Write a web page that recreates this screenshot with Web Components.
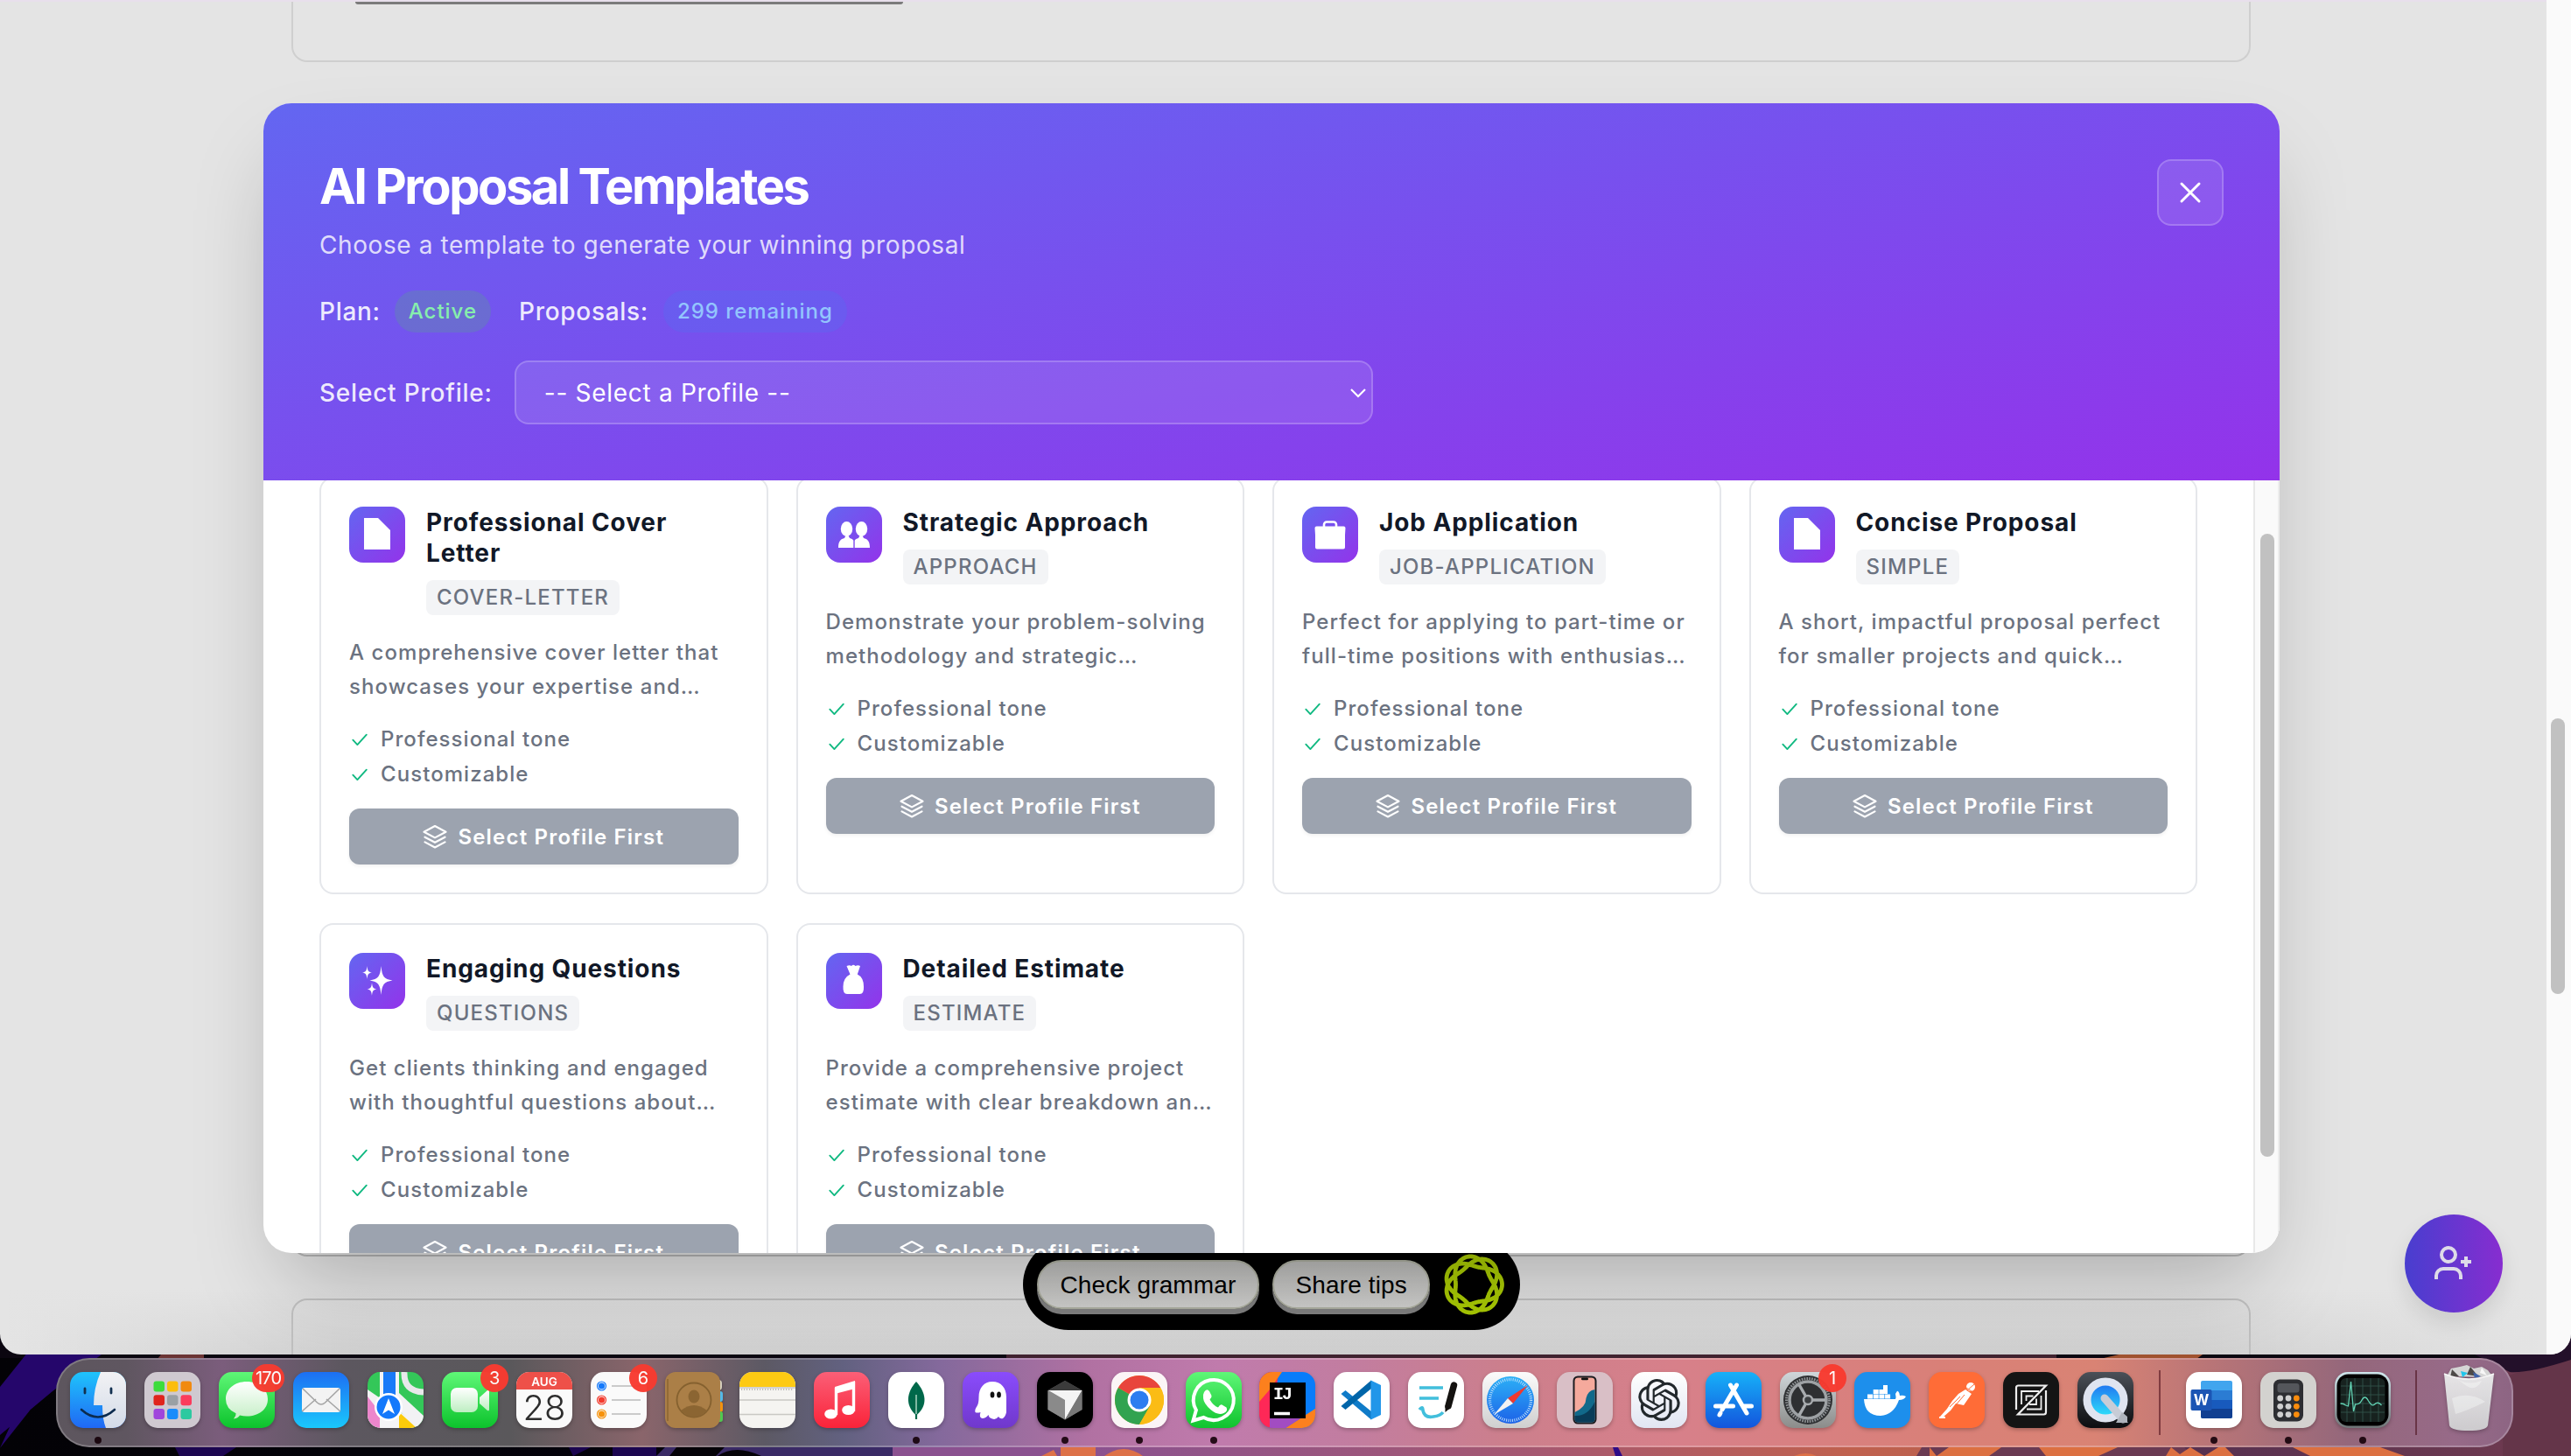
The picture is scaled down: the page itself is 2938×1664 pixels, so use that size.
<!DOCTYPE html>
<html lang="en">
<head>
<meta charset="utf-8">
<title>AI Proposal Templates</title>
<style>
html,body{margin:0;padding:0}
body{width:2938px;height:1664px;overflow:hidden;background:#000;font-family:Inter,"Liberation Sans",sans-serif}
</style>
</head>
<body>
<desk-top>
  <app-window>
    <page-backdrop></page-backdrop>
    <assistant-bar slot="float">
      <key-button>Check grammar</key-button>
      <key-button>Share tips</key-button>
    </assistant-bar>
    <proposal-dialog slot="dialog" heading="AI Proposal Templates" sub="Choose a template to generate your winning proposal">
      <template-card icon="doc" heading="Professional Cover Letter" tag="COVER-LETTER">A comprehensive cover letter that<br>showcases your expertise and…</template-card>
      <template-card icon="people" heading="Strategic Approach" tag="APPROACH">Demonstrate your problem-solving<br>methodology and strategic…</template-card>
      <template-card icon="case" heading="Job Application" tag="JOB-APPLICATION">Perfect for applying to part-time or<br>full-time positions with enthusias…</template-card>
      <template-card icon="doc" heading="Concise Proposal" tag="SIMPLE">A short, impactful proposal perfect<br>for smaller projects and quick…</template-card>
      <template-card icon="spark" heading="Engaging Questions" tag="QUESTIONS">Get clients thinking and engaged<br>with thoughtful questions about…</template-card>
      <template-card icon="bag" heading="Detailed Estimate" tag="ESTIMATE">Provide a comprehensive project<br>estimate with clear breakdown an…</template-card>
    </proposal-dialog>
    <fab-button slot="float"></fab-button>
  </app-window>
  <mac-dock slot="dock"></mac-dock>
</desk-top>

<script>
const define=(name,html,after)=>customElements.define(name,class extends HTMLElement{
  connectedCallback(){
    if(this.shadowRoot)return;
    const r=this.attachShadow({mode:'open'});
    r.innerHTML=typeof html==='function'?html(this):html;
    if(after)after(r,this);
  }
});

/* ---------- template card ---------- */
const glyphs={
 doc:'<path d="M17 13h16l14 14v22H17z" fill="#fff"/>',
 people:'<g fill="#fff"><ellipse cx="23.500" cy="25.500" rx="6.700" ry="8.500"/><ellipse cx="40.500" cy="25.500" rx="6.700" ry="8.500"/><path d="M14 47c0-8 3-10 7-11l1.500-3h3l1.500 3c2 .6 3.600 1.300 4.300 2.800V47zM50 47c0-8-3-10-7-11l-1.500-3h-3l-1.500 3c-2 .6-3.600 1.300-4.300 2.800V47z"/></g>',
 case:'<path d="M25 24v-3.500a3 3 0 0 1 3-3h8a3 3 0 0 1 3 3V24" fill="none" stroke="#fff" stroke-width="2.600"/><path d="M16.500 22.500h31q2 0 2 2l-.5 8v14q0 2-2 2H17q-2 0-2-2v-14l-.5-8q0-2 2-2z" fill="#fff"/>',
 spark:'<g fill="#fff"><path d="M36.500 15c1.100 12 3.200 15 13 16.500-9.800 1.500-11.900 4.500-13 16.500-1.100-12-3.200-15-13-16.500 9.800-1.500 11.900-4.500 13-16.500z"/><path d="M20.500 15c.5 5.300 1.300 6.700 5.500 7.500-4.200.8-5 2.200-5.500 7.500-.5-5.300-1.300-6.700-5.500-7.500 4.200-.8 5-2.200 5.500-7.500z"/><path d="M26 34c.5 5.300 1.300 6.700 5.500 7.500-4.200.8-5 2.200-5.500 7.500-.5-5.300-1.300-6.700-5.500-7.500 4.200-.8 5-2.200 5.500-7.500z"/></g>',
 bag:'<path d="M23.500 15q3.500-1.500 5.500 0 2-2.500 4.500 0 3-1.500 5.500 0L35.800 24.500q7.200 3.500 7.200 14 .5 8.500-4.500 8.500H24q-5 0-4.500-8.500 0-10 8-14z" fill="#fff"/>'
};
const check='<svg width="24" height="24" viewBox="0 0 24 24"><path d="M4.300 12.700l5.100 5.400L19.800 6.700" fill="none" stroke="#10b981" stroke-width="1.900" stroke-linecap="round" stroke-linejoin="round"/></svg>';
define('template-card',e=>`<style>
:host{display:flex;flex-direction:column;box-sizing:border-box;padding:32px;border:2px solid #e5e7eb;border-radius:16px;background:#fff;color:#6b7280;font-size:24px;font-weight:500;letter-spacing:1.060px}
header{display:flex;gap:24px;align-items:flex-start;margin-bottom:23px}
.ico{width:64px;height:64px;flex:none;border-radius:16px;background:linear-gradient(135deg,#6366f1,#9333ea)}
h3{margin:1px 0 13px;font-size:28px;line-height:35px;font-weight:700;color:#111827;letter-spacing:.9px}
.tag{display:block;width:max-content;background:#f3f4f6;border-radius:8px;padding:4px 12px;line-height:32px;letter-spacing:1.200px}
p{margin:0 0 25px;line-height:39px;white-space:nowrap}
ul{list-style:none;margin:0 0 23px;padding:0;display:flex;flex-direction:column;gap:8px}
li{display:flex;gap:12px;align-items:center;line-height:32px}
button{all:unset;display:flex;align-items:center;justify-content:center;gap:12px;height:64px;border-radius:12px;background:#9ca3af;color:#fff;font-weight:600;letter-spacing:1.200px;flex:none;box-shadow:0 2px 4px rgba(0,0,0,.06)}
</style>
<header><svg class="ico" viewBox="0 0 64 64">${glyphs[e.getAttribute('icon')]}</svg><div><h3>${e.getAttribute('heading')}</h3><span class="tag">${e.getAttribute('tag')}</span></div></header>
<p><slot></slot></p>
<ul><li>${check}<span>Professional tone</span></li><li>${check}<span>Customizable</span></li></ul>
<button><svg width="28" height="28" viewBox="0 0 28 28" fill="none" stroke="#fff" stroke-width="2.200" stroke-linejoin="round" stroke-linecap="round"><path d="M14 2L26.500 8.700 14 15.400 1.500 8.700z"/><path d="M2.500 14.700L14 20.800l11.500-6.100M2.500 20.400L14 26.500l11.500-6.100"/></svg><span>Select Profile First</span></button>`);

/* ---------- dialog ---------- */
define('proposal-dialog',e=>`<style>
:host{display:flex;flex-direction:column;width:2304px;height:1314px;border-radius:32px;overflow:hidden;background:#fff;box-shadow:0 50px 100px -24px rgba(0,0,0,.25)}
.head{height:431px;flex:none;box-sizing:border-box;padding:64px;display:flex;justify-content:space-between;align-items:flex-start;background:linear-gradient(to bottom right,#6366f1,#9333ea);color:rgba(255,255,255,.9);font-size:28px;letter-spacing:.7px;font-weight:500}
.info{display:flex;flex-direction:column}
h2{margin:0;font-size:56px;line-height:62px;font-weight:700;color:#fff;letter-spacing:-2.450px}
.sub{margin-top:13px;line-height:46px;font-weight:400;color:rgba(255,255,255,.8);letter-spacing:.59px}
.plan{display:flex;align-items:center;margin-top:29px;height:48px}
.pill{height:48px;line-height:48px;border-radius:24px;padding:0 16px;font-size:24px;letter-spacing:.98px}
.a{background:rgba(74,200,94,.2);color:#86efac;margin:0 32px 0 16px}
.b{background:rgba(59,130,246,.2);color:#93c5fd;margin-left:17px}
.sel{display:flex;align-items:center;margin-top:32px;gap:25px;letter-spacing:.78px}
.box{box-sizing:border-box;width:981px;height:73px;border:2px solid rgba(255,255,255,.2);border-radius:16px;background:rgba(255,255,255,.1);display:flex;align-items:center;justify-content:space-between;padding:0 5px 0 32px;color:#fff;font-weight:400;letter-spacing:.700px;white-space:nowrap}
.close{width:76px;height:76px;box-sizing:border-box;border:2px solid rgba(255,255,255,.2);border-radius:16px;background:rgba(255,255,255,.1);display:flex;align-items:center;justify-content:center}
.body{flex:1;min-height:0;display:flex}
.grid{flex:1;overflow:hidden;padding:0 64px;display:grid;grid-template-columns:repeat(4,1fr);grid-template-rows:477px 442px;gap:33px 32px;align-content:start}
::slotted(template-card){margin-top:-4px;margin-bottom:4px}
.bar{width:30px;box-sizing:border-box;background:#fafafa;border-left:2px solid #e8e8e8;border-right:2px solid #ededed;padding:61px 4px 0 6px}
.bar i{display:block;width:16px;height:712px;border-radius:8px;background:#c1c1c1}
</style>
<div class="head"><div class="info"><h2>${e.getAttribute('heading')}</h2><div class="sub">${e.getAttribute('sub')}</div>
<div class="plan"><span>Plan:</span><span class="pill a">Active</span><span>Proposals:</span><span class="pill b">299 remaining</span></div>
<div class="sel"><span>Select Profile:</span><div class="box"><span>-- Select a Profile --</span><svg width="20" height="14" viewBox="0 0 20 14"><path d="M2 3l8 8 8-8" fill="none" stroke="#fff" stroke-width="2.200"/></svg></div></div></div>
<div class="close"><svg width="28" height="28" viewBox="0 0 28 28"><path d="M4 4l20 20M24 4L4 24" stroke="#fff" stroke-width="3" stroke-linecap="round"/></svg></div></div>
<div class="body"><div class="grid"><slot></slot></div><div class="bar"><i></i></div></div>`);

/* ---------- page behind the dialog ---------- */
define('page-backdrop',`<style>
:host{display:flex;width:2938px;height:1548px;background:#e4e4e4}
main{flex:1;border-top:2px solid #e8dfec;box-sizing:border-box;height:1548px;padding:0 338px 0 333px;display:flex;flex-direction:column;gap:48px;background:linear-gradient(#e4e4e4,rgba(228,228,228,0)) 0 100%/100% 76px no-repeat,linear-gradient(90deg,transparent,rgba(0,0,0,.09) 400px,rgba(0,0,0,.09) 2500px,transparent) 0 100%/100% 76px no-repeat}
section{box-sizing:border-box;border:2px solid #cfcfcf;border-radius:18px}
.a{height:69px;border-top:0;border-radius:0 0 18px 18px;padding-left:71px}
.a i{display:block;width:626px;height:3px;border-bottom:3px solid #7b7b7b;border-radius:0 0 12px 12px;box-sizing:border-box}
.b{height:1317px;border-color:#b4b4b4}
.c{border-color:#c0c0c0;border-bottom:0;border-radius:18px 18px 0 0;height:64px}
.bar{width:28px;box-sizing:border-box;background:#fafafa;padding:821px 7px 0 5px}
.bar i{display:block;height:315px;border-radius:8px;background:#c1c1c1}
</style><main><section class="a"><i></i></section><section class="b"></section><section class="c"></section></main><div class="bar"><i></i></div>`);

/* ---------- floating grammar bar ---------- */
let knot='';for(let i=0;i<=600;i++){const t=i/600*6*Math.PI,r=26.500+6*Math.cos(7*t/3);knot+=(i?'L':'M')+(35+r*Math.cos(t)).toFixed(1)+' '+(35+r*Math.sin(t)).toFixed(1)}
define('key-button',`<style>:host{display:block;height:56px;box-sizing:border-box;border:2px solid #aeb0a2;border-radius:28px;padding:1px 24.500px 0;background:linear-gradient(#bcbcba,#d0d0ce);box-shadow:0 6px 0 #808080;color:#000;font:28px/52px "Liberation Sans",sans-serif;letter-spacing:.14px;white-space:nowrap}</style><slot></slot>`);
define('assistant-bar',`<style>:host{display:flex;box-sizing:border-box;width:568px;height:104px;border-radius:52px;background:#000;padding:24px 16px 0;gap:15px;align-items:flex-start}svg{margin-top:-7px}</style><slot></slot><svg width="70" height="70" viewBox="0 0 70 70"><path d="${knot}z" fill="none" stroke="#aacb04" stroke-width="4.800"/></svg>`);
define('fab-button',`<style>:host{display:flex;align-items:center;justify-content:center;width:112px;height:112px;border-radius:50%;background:linear-gradient(90deg,#483ecf,#872dd0);box-shadow:0 12px 24px rgba(0,0,0,.1)}</style>
<svg width="48" height="48" viewBox="0 0 48 48" fill="none" stroke="#dedbe8" stroke-width="4"><circle cx="18" cy="14" r="8"/><path d="M4 42v-4a8 8 0 0 1 8-8h12a8 8 0 0 1 8 8v4M38 16v12M32 22h12"/></svg>`);

/* ---------- browser window ---------- */
define('app-window',`<style>
:host{display:block;position:relative;width:2938px;height:1548px;border-radius:0 0 24px 24px;overflow:hidden;background:#e4e4e4}
.dlg{position:absolute;left:301px;top:118px}
::slotted(assistant-bar){position:absolute;left:1169px;top:1416px}
::slotted(fab-button){position:absolute;left:2748px;top:1388px}
</style><slot></slot><slot name="float"></slot><div class="dlg"><slot name="dialog"></slot></div>`);

/* ---------- desktop ---------- */
define('desk-top',`<style>
:host{display:block;position:relative;width:2938px;height:1664px}
.wall{position:absolute;left:0;top:1520px}
.dock{position:absolute;left:64px;top:1552px}
</style>
<svg class="wall" width="2938" height="144" viewBox="0 1520 2938 144">
<defs><linearGradient id="w"><stop offset="0" stop-color="#030206"/><stop offset=".28" stop-color="#05030c"/><stop offset=".3" stop-color="#3b2858"/><stop offset=".42" stop-color="#8a5290"/><stop offset=".6" stop-color="#a65870"/><stop offset=".72" stop-color="#c0614e"/><stop offset=".8" stop-color="#b5604f"/><stop offset=".85" stop-color="#56304f"/><stop offset="1" stop-color="#713b50"/></linearGradient></defs>
<rect y="1520" width="2938" height="144" fill="url(#w)"/>
<path d="M0 1520h2938v32H0z" fill="#0b0610"/><path d="M1150 1540h1200v14H1150z" fill="#40222f"/>
<path d="M0 1585l32-40h88L60 1590 0 1640zM0 1655l48-105h24L34 1612z" fill="#25066b"/>
<path d="M200 1654h70l-15 10h-50zM700 1654h50v10h-50zM650 1654h25l-20 10z" fill="#1c0650"/>
<path d="M180 1553l8-10h45v10z" fill="#6b3434"/>
<path d="M760 1654h300v10H750z" fill="#3a2a66"/><path d="M820 1664q20-14 50 0zM765 1664l8-10h55l-10 10z" fill="#050308"/>
<path d="M1020 1664v-10h180v10z" fill="#8b5190"/>
<path d="M1190 1664l14-7 4 7zM1212 1664v-10h40v10zM1262 1664q22-16 44 0zM2050 1664q14-6 26 0z" fill="#dd7148"/>
<path d="M1843 1654h6l5 10h-8z" fill="#2e0a86"/>
<path d="M2190 1664l6-10h300l10 10z" fill="#6a3a52"/><path d="M2205 1664v-10l8 10 14-10h60l-14 10zM2330 1654l90 0-22 10h-60zM2475 1664l6-10 10 8 12-8 16 10 16-10h8l10 10zM2620 1654h100l28 10H2640z" fill="#dc7041"/>
<path d="M2400 1553l30-7h90l-10 7z" fill="#a0522f"/>
<path d="M2860 1664v-90l78-24v114z" fill="#643549"/><path d="M2700 1520h238v34q-50 16-70 14l-40-20H2700z" fill="#23102a"/>
</svg><slot></slot><div class="dock"><slot name="dock"></slot></div>`);

/* ---------- dock ---------- */
const g=(id,a,b,x)=>`<linearGradient id="${id}" ${x||'x2="0" y2="1"'}><stop stop-color="${a}"/><stop offset="1" stop-color="${b}"/></linearGradient>`;
const bg=f=>`<rect width="64" height="64" rx="15" fill="${f}"/>`;
const grad=(a,b)=>`<defs>${g('b',a,b)}</defs>`+bg('url(#b)');
const T=(x,y,s,t,c,w)=>`<text x="${x}" y="${y}" font-size="${s}" fill="${c}" font-weight="${w||400}" text-anchor="middle" font-family="Inter,sans-serif">${t}</text>`;
const rep=(n,f)=>Array.from({length:n},(_,i)=>f(i)).join('');
const clip=s=>`<clipPath id="c"><rect width="64" height="64" rx="15"/></clipPath><g clip-path="url(#c)">${s}</g>`;
const apps=[
['Finder',1,`<defs>${g('b','#1fc4fb','#2068f4')}${g('d','#f2f2f4','#d3dbe8')}</defs>`+clip('<rect width="64" height="64" fill="url(#b)"/><path d="M35 0Q27 18 27 38h10q0 16 4 26h23V0z" fill="url(#d)"/><path d="M13 43q19 17 38 0" fill="none" stroke="#0b2b4e" stroke-width="2.600" stroke-linecap="round"/><path d="M17 19v5M47 19v5" stroke="#12304f" stroke-width="2.800" stroke-linecap="round"/>')],
['Launchpad',0,bg('#cfc9d0')+rep(9,i=>`<rect x="${10.500+i%3*15.500}" y="${10.500+(i/3|0)*15.700}" width="12.500" height="12" rx="3" fill="${['#3ddc3c','#fcbd0c','#f18a10','#e0241c','#9aa0a4','#fb3b5c','#a045dc','#1a8cfb','#2cc9a0'][i]}"/>`)],
['Messages',0,grad('#5ff777','#0cc32c')+`<defs>${g('e','#fff','#c5efc6')}</defs><path d="M32 11c14 0 24 8.500 24 20S46 50.500 32 50.500q-4 0-8-.9-2 3.500-7 4 3-3 2.600-6.300Q8 42 8 31C8 19.500 18 11 32 11z" fill="url(#e)"/>`],
['Mail',0,grad('#1d6ff3','#1ac8fc')+'<rect x="10" y="18" width="44" height="28" rx="3" fill="#f3f3f3"/><path d="M10 45l16-14M54 45L38 31M11 19l16.500 16q4.500 4 9 0L53 19" fill="none" stroke="#a5a5a5" stroke-width="1.600"/>'],
['Maps',0,clip('<rect width="64" height="64" fill="#34c759"/><path d="M0 20l64 44H0z" fill="#f2f2f4"/><path d="M0 28l28 36H0z" fill="#ec86cc"/><path d="M34 64V44l22 20z" fill="#fccb0a"/><path d="M36 24l28 26v14h-6L36 44z" fill="#f2f2f4"/><path d="M14 0h22v64H14z" fill="#f4f4f6"/><path d="M18 0h14v40H18z" fill="#1a7af8"/><path d="M42 0q-1 22 22 23" fill="none" stroke="#e8e8ea" stroke-width="7"/><path d="M0 0h14v20L0 8z" fill="#34c759"/><circle cx="24" cy="40" r="16" fill="#fff"/><circle cx="24" cy="40" r="13.500" fill="#1479fb"/><path d="M24 30l7 18-7-4.500-7 4.500z" fill="#fff"/>')],
['FaceTime',0,grad('#5ff777','#0cc32c')+`<defs>${g('e','#fff','#bdeec1')}</defs><rect x="10" y="18" width="31" height="28" rx="7" fill="url(#e)"/><path d="M43 29l9-8q2-1 2 1v21q0 2-2 1l-9-8z" fill="url(#e)"/>`,'3'],
['Calendar',0,clip('<rect width="64" height="64" fill="#fafafa"/><rect width="64" height="20" fill="#ee5049"/>')+T(32,15.500,13.500,'AUG','#fff',600)+T(32,54.500,40,'28','#2d2d2d',300)],
['Reminders',0,bg('#fafafa')+[['#1479fb',16],['#f33b2e',32],['#f6920c',48]].map(([c,y])=>`<circle cx="12.500" cy="${y}" r="5" fill="none" stroke="${c}" stroke-width="1.200"/><circle cx="12.500" cy="${y}" r="3.600" fill="${c}"/><path d="M24 ${y}h33" stroke="#bbb" stroke-width="1.600"/>`).join(''),'6'],
['Contacts',0,'<rect x="44" y="9" width="21" height="12" rx="4" fill="#d3cdbc"/><rect x="44" y="22" width="22" height="12" rx="3" fill="#53b9e8"/><rect x="44" y="34" width="22" height="12" rx="3" fill="#f3920f"/><rect x="44" y="45" width="22" height="12" rx="3" fill="#50c850"/><rect width="63" height="64" rx="12" fill="#ab7f47"/><g fill="none" stroke="#85612f" stroke-width="1.800"><circle cx="33" cy="32" r="19.500"/></g><ellipse cx="33" cy="28" rx="6.500" ry="7.500" fill="#8b6532"/><path d="M18 44q15-12 30 0-15 15-30 0z" fill="#8b6532"/><path d="M3 8v48" stroke="#8b6532" stroke-width="1.500"/>'],
['Notes',0,clip('<rect width="64" height="64" fill="#f5f4f1"/><rect width="64" height="17" fill="#fdca13"/><path d="M0 18h64M0 32h64M0 48.500h64" stroke="#c9c8c4" stroke-width="1.400"/><path d="M2 20h60" stroke="#aaa" stroke-width="1.400" stroke-dasharray="1.200 1.800"/>')],
['Music',0,grad('#fb5f77','#fa2339')+'<path d="M24 17l23-7v9l-23 6z" fill="#fff"/><path d="M25.500 18v31M45.500 11v34" stroke="#fff" stroke-width="3.400"/><ellipse cx="19.500" cy="48" rx="7.300" ry="5.500" fill="#fff"/><ellipse cx="39.500" cy="43.500" rx="7.300" ry="5.500" fill="#fff"/>'],
['MongoDB',1,bg('#fff')+'<path d="M32 11c11 12 14 27 .5 38h-1C19 38 21 23 32 11z" fill="#00684a"/><path d="M32 26v27" stroke="#7fb8a2" stroke-width="2"/><path d="M32 48v6" stroke="#00684a" stroke-width="2.200"/>'],
['Ghost',0,grad('#8a4cfc','#7038cc')+'<path d="M34 11c10 0 16 7 16 18v17q-1 5-4 7-3 1-5-2-3 4-7 2.500-4-1-4.500-4.500-3 4-7 4-4-1-2-7-4 1-6 0-1-3 2-7 2-3 2-10c0-11 6-18 15.500-18z" fill="#fff"/><ellipse cx="34" cy="26" rx="2.400" ry="3.600" fill="#111"/><ellipse cx="41.500" cy="26" rx="2.400" ry="3.600" fill="#111"/>'],
['Cursor',1,bg('#000')+'<path d="M32 10l19.500 11v22L32 54.500 12.500 43V21z" fill="#6e6e6e"/><path d="M32 10l19.500 11H12.500z" fill="#3b3b3b"/><path d="M12.500 21L32 32v22.500L12.500 43z" fill="#8a8a8a"/><path d="M13 21h38.500L32 54.500V32z" fill="#f4f4f4"/><path d="M51.500 21v22L32 54.500z" fill="#777"/>'],
['Chrome',1,bg('#fbf5f6')+'<g transform="translate(32 32)"><circle r="28" fill="#fbbc15"/><path d="M0 0L-24.250-14A28 28 0 0 1 24.250-14L24.250-14H0z" fill="#e8453c"/><path d="M-24.250-14A28 28 0 0 0 0 28L12 7 0 0z" fill="#31a350"/><path d="M24.250-14H0L12 7 0 28A28 28 0 0 0 24.250-14z" fill="#fbbc15"/><circle r="13.500" fill="#fff"/><circle r="10.500" fill="#2c7df0"/></g>'],
['WhatsApp',1,grad('#5ff777','#0fc32e')+'<path d="M8.500 55.500l3.400-12A23 23 0 1 1 20.500 52z" fill="none" stroke="#fff" stroke-width="4"/><path d="M21 23q3-5 6-1l2.500 5q.5 2-2 4.500 4 7 9.500 9 2.500-4 4.500-3l5 3q2 4-3 6.500-7 3-15-4t-8.500-13q-.7-4 1-7z" fill="#fff"/>'],
['IntelliJ IDEA',0,clip('<rect width="64" height="64" fill="#087cfa"/><path d="M0 0h22L14 64H0z" fill="#fe2857"/><path d="M0 0h26L12 20 0 34z" fill="#fc801d"/><path d="M64 42v22H30z" fill="#fc801d"/><path d="M12 50h40L30 64H12z" fill="#a24cc2"/><rect x="12" y="12" width="41" height="41" fill="#000"/><path d="M17 47.500h18" stroke="#fff" stroke-width="3.400"/>')+'<text x="16" y="31" font-size="20" font-weight="700" fill="#fff" font-family="Liberation Mono,monospace" letter-spacing="-2">IJ</text>'],
['Visual Studio Code',0,bg('#fff')+'<path d="M8.500 25l5-4L43 45v9.500z" fill="#0f7bc8"/><path d="M8.500 39l5 4L43 19V9.500z" fill="#0065a9"/><path d="M42.500 9.500L54 15v34l-11.500 5.500z" fill="#2196e9"/>'],
['Notebook',0,bg('#fff')+'<path d="M13 18h27M13 30h22" stroke="#42bfdc" stroke-width="3.600"/><path d="M13 43q4-5 4 1 2 9 12 7 8-1 11-5" fill="none" stroke="#42bfdc" stroke-width="3.600"/><path d="M52.500 15L46 39" stroke="#141210" stroke-width="7.500" stroke-linecap="round"/><path d="M42.500 38l7 2-7 6z" fill="#141210"/>'],
['Safari',0,grad('#fbfbfb','#cfcfcf')+`<defs>${g('e','#2cb0f6','#1c62e8')}</defs><circle cx="32" cy="32" r="27" fill="url(#e)"/><circle cx="32" cy="32" r="23.500" fill="none" stroke="#c5e4fb" stroke-width="3.400" stroke-dasharray=".9 1.500"/><path d="M52 15L35 36l-6-6z" fill="#f0392f"/><path d="M13 49l16-19 6 6z" fill="#f2f2f2"/>`],
['iPhone Mirroring',0,bg('#d9bfc6')+'<rect x="18.500" y="4.500" width="27" height="55" rx="5.500" fill="#1c1c20"/><rect x="20.500" y="6.500" width="23" height="51" rx="4" fill="#f5a99c"/><path d="M20.500 46q13-6 13-16 2-9 10-10v33q0 4.500-4 4.500h-15q-4 0-4-4z" fill="#11698a"/><path d="M20.500 50q15 1 23-16v19q0 4.500-4 4.500h-15q-4 0-4-4z" fill="#093c58"/><rect x="28" y="6.500" width="8" height="2.800" rx="1.400" fill="#111"/>'],
['ChatGPT',0,grad('#fff','#e1e5f2')+'<path transform="translate(8 8) scale(2)" fill="#22282c" d="M22.2819 9.8211a5.9847 5.9847 0 0 0-.5157-4.9108 6.0462 6.0462 0 0 0-6.5098-2.9A6.0651 6.0651 0 0 0 4.9807 4.1818a5.9847 5.9847 0 0 0-3.9977 2.9 6.0462 6.0462 0 0 0 .7427 7.0966 5.98 5.98 0 0 0 .511 4.9107 6.051 6.051 0 0 0 6.5146 2.9001A5.9847 5.9847 0 0 0 13.2599 24a6.0557 6.0557 0 0 0 5.7718-4.2058 5.9894 5.9894 0 0 0 3.9977-2.9001 6.0557 6.0557 0 0 0-.7475-7.0729zm-9.022 12.6081a4.4755 4.4755 0 0 1-2.8764-1.0408l.1419-.0804 4.7783-2.7582a.7948.7948 0 0 0 .3927-.6813v-6.7369l2.02 1.1686a.071.071 0 0 1 .038.052v5.5826a4.504 4.504 0 0 1-4.4945 4.4944zm-9.6607-4.1254a4.4708 4.4708 0 0 1-.5346-3.0137l.142.0852 4.783 2.7582a.7712.7712 0 0 0 .7806 0l5.8428-3.3685v2.3324a.0804.0804 0 0 1-.0332.0615L9.74 19.9502a4.4992 4.4992 0 0 1-6.1408-1.6464zM2.3408 7.8956a4.485 4.485 0 0 1 2.3655-1.9728V11.6a.7664.7664 0 0 0 .3879.6765l5.8144 3.3543-2.0201 1.1685a.0757.0757 0 0 1-.071 0l-4.8303-2.7865A4.504 4.504 0 0 1 2.3408 7.872zm16.5963 3.8558L13.1038 8.364 15.1192 7.2a.0757.0757 0 0 1 .071 0l4.8303 2.7913a4.4944 4.4944 0 0 1-.6765 8.1042v-5.6772a.79.79 0 0 0-.407-.667zm2.0107-3.0231l-.142-.0852-4.7735-2.7818a.7759.7759 0 0 0-.7854 0L9.409 9.2297V6.8974a.0662.0662 0 0 1 .0284-.0615l4.8303-2.7866a4.4992 4.4992 0 0 1 6.6802 4.66zM8.3065 12.863l-2.02-1.1638a.0804.0804 0 0 1-.038-.0567V6.0742a4.4992 4.4992 0 0 1 7.3757-3.4537l-.142.0805L8.704 5.459a.7948.7948 0 0 0-.3927.6813zm1.0976-2.3654l2.602-1.4998 2.6069 1.4998v2.9994l-2.5974 1.4997-2.6067-1.4997Z"/>'],
['App Store',0,grad('#17b1f8','#1355dd')+'<g stroke="#fff" stroke-width="5" stroke-linecap="round"><path d="M35.500 15L19 43M28.500 15L47 47M11.500 39h20M43 39h9.500M17 47l-1 2"/></g>'],
['System Settings',0,grad('#cfd6da','#8b8c8a')+`<circle cx="32" cy="32" r="28" fill="#2e3032"/><circle cx="32" cy="32" r="24.500" fill="none" stroke="#8e9295" stroke-width="3" stroke-dasharray="1.600 1.300"/><circle cx="32" cy="32" r="21" fill="none" stroke="#9da1a4" stroke-width="3.500"/><g stroke="#a7abae" stroke-width="3.400"><path d="M32 32h20M32 32L22 14.700M32 32L22 49.300"/></g><circle cx="32" cy="32" r="5" fill="#3c3f41" stroke="#a7abae" stroke-width="2.500"/>`,'1'],
['Docker',0,bg('#1d8fec')+'<path d="M11 31h36q1-2 0-6 2-4 3-3 2 2 2 5 4-1 7 1-2 4-8 4-6 17-21 18-18 0-19-19z" fill="#fff"/><g fill="#fff"><rect x="15" y="25.500" width="6" height="5"/><rect x="21.700" y="25.500" width="6" height="5"/><rect x="28.400" y="25.500" width="6" height="5"/><rect x="35.100" y="25.500" width="6" height="5"/><rect x="21.700" y="20" width="6" height="5"/><rect x="28.400" y="20" width="6" height="5"/><rect x="33" y="15" width="5" height="10"/></g>'],
['Postman',0,bg('#ff6c37')+'<circle cx="48" cy="17" r="5" fill="#fff"/><path d="M42 20l7 5-9 13-9-2-6 8-9 8-3-1 8-9q5-9 13-17z" fill="#fff"/><path d="M43 18l6 4M24 40l12-12M29 40l12-14M44 21l8-7" stroke="#ff6c37" stroke-width="1"/><path d="M12 52h7" stroke="#fff" stroke-width="2"/>'],
['Zed',0,bg('#141414')+'<g fill="none" stroke="#eee" stroke-width="2.200"><path d="M15 43V18q0-2.500 2.500-2.500H49L17 48.500h29.500q2.500 0 2.500-2.500V21"/><path d="M21 37V22h20M43.500 27v15.500H27" stroke-width="1.800"/><path d="M26.500 33v-5.500h8M38 30.500V37h-8" stroke-width="1.800"/></g>'],
['QuickTime Player',0,grad('#4b5058','#0c0d10')+`<defs>${g('e','#1f6df0','#2ee6fb')}</defs><path d="M40 40l18 18H47z" fill="#aab0bb"/><circle cx="32" cy="32" r="21" fill="url(#e)" stroke="#dfe4f0" stroke-width="9"/><path d="M31 30l21 24" stroke="#c7ccd6" stroke-width="9" stroke-linecap="round"/><path d="M44 58h13v-7l-6-5z" fill="#aeb3bc"/>`],
'sep',
['Microsoft Word',1,bg('#fff')+'<rect x="17" y="10" width="36" height="43" rx="2" fill="#41a5ee"/><path d="M17 21h36v11H17z" fill="#2b7cd3"/><path d="M17 32h36v10H17z" fill="#185abd"/><path d="M17 42h36v9q0 2-2 2H19q-2 0-2-2z" fill="#103f91"/><rect x="5.500" y="20" width="24" height="24" rx="2" fill="#1b55b4"/>'+T(17.500,38,17,'W','#fff',700)],
['Calculator',1,bg('#d3d2cf')+'<rect x="15" y="8.500" width="34" height="48" rx="7" fill="#2d2e32"/><rect x="19.500" y="13" width="25" height="10.500" rx="3" fill="#54565b"/>'+rep(9,i=>`<circle cx="${22.700+i%3*9.300}" cy="${30+(i/3|0)*9.300}" r="3.400" fill="${i%3==2?'#fb8c0c':'#cfcfcf'}"/>`)],
['Activity Monitor',1,grad('#cfe6ec','#6f7476')+'<rect x="2.500" y="2.500" width="59" height="59" rx="13" fill="#000"/><rect x="6.500" y="7" width="51" height="50" rx="6" fill="#17221f"/><path d="M14 7v50M23 7v50M32 7v50M41 7v50M50 7v50M7 16h50M7 26h50M7 36h50M7 46h50" stroke="#31524a" stroke-width=".9"/><path d="M6.500 36q4 0 6 2l3 1 3-28 3 34 2-8q5 0 7-4 4-8 8 0 4 7 7 4 4-4 8 1" fill="none" stroke="#62d3b4" stroke-width="1.300"/>'],
'sep2',
['Trash',0,`<defs>${g('b','#e9e9ea','#cfcfd1')}</defs><g transform="translate(-2 0)"><path d="M8 5l5-9 10-2 8-2 8 4 9-2 7 4 6 8z" fill="#d5d5d5"/><path d="M14-3l8 8-10 1zM35-6l-4 9 13 2z" fill="#4d4a48"/><path d="M24-1l8 2-6 5z" fill="#20c5ec"/><path d="M38 0l9 5-7 2z" fill="#3e62a8"/><path d="M48-5l6 9-8-3z" fill="#f7f7f7"/><path d="M5 2q28 12 57 0L55 61q-2 6-22 6t-22-6z" fill="url(#b)" opacity=".97"/><path d="M20 8q12 8 28 2-8 14-20 4zM14 30q20-8 38 4-20 10-34 14z" fill="#fff" opacity=".35"/><path d="M5 2q28 12 57 0" fill="none" stroke="#f6f6f6" stroke-width="1.600"/></g>`]
];
define('dock-item',`<style>
:host{display:flex;flex-direction:column;align-items:center;width:84.950px;position:relative;padding-top:14px;box-sizing:border-box}
.art{width:64px;height:64px;filter:drop-shadow(0 2px 2px rgba(0,0,0,.25))}
.dot{width:8px;height:8px;border-radius:50%;background:rgba(20,0,8,.9);margin-top:10px}
.badge{position:absolute;top:5px;left:54px;min-width:32px;height:32px;box-sizing:border-box;padding:0 4px;border-radius:16px;background:#f83b30;color:#fff;font-size:20px;line-height:32px;text-align:center;letter-spacing:-.8px;opacity:.97}
.wide{left:48px}
</style><div class="art"></div>`,(r,e)=>{
  r.querySelector('.art').innerHTML=`<svg width="64" height="64" viewBox="0 0 64 64" style="overflow:visible;display:block">${e.art}</svg>`;
  if(e.running)r.innerHTML+='<div class="dot"></div>';
  if(e.badge)r.innerHTML+=`<span class="badge${e.badge.length>1?' wide':''}">${e.badge}</span>`;
});
define('mac-dock',`<style>
:host{display:flex;box-sizing:border-box;width:2808px;height:102px;border-radius:38px;padding-left:4px;border:2px solid rgba(255,255,255,.22);background-origin:border-box;background-image:linear-gradient(90deg,#5d565e 0,#5f5660 80px,#7b5d7c 190px,#5c575f 330px,#5a585b 520px,#8a656b 670px,#5c5964 810px,#626180 900px,#84699c 1010px,#b171a2 1180px,#c07bac 1330px,#c27da0 1480px,#cc7f8c 1660px,#d7808a 1850px,#d98078 2150px,#d98374 2330px,#b97577 2460px,#94677b 2620px,#976a88 2740px,#8d6583 2808px)}
i{width:39px;display:flex;justify-content:center;padding-top:12px;box-sizing:border-box;flex:none}
i::before{content:"";width:2px;height:74px;background:rgba(70,10,20,.55)}
i.n{width:37.500px}
</style>`,r=>{
  apps.forEach(a=>{
    if(typeof a==='string'){const s=document.createElement('i');if(a==='sep2')s.className='n';r.append(s);return}
    const d=document.createElement('dock-item');d.running=a[1];d.art=a[2];d.badge=a[3]||(a[0]==='Messages'?'170':'');r.append(d);
  });
});
</script>
</body>
</html>
